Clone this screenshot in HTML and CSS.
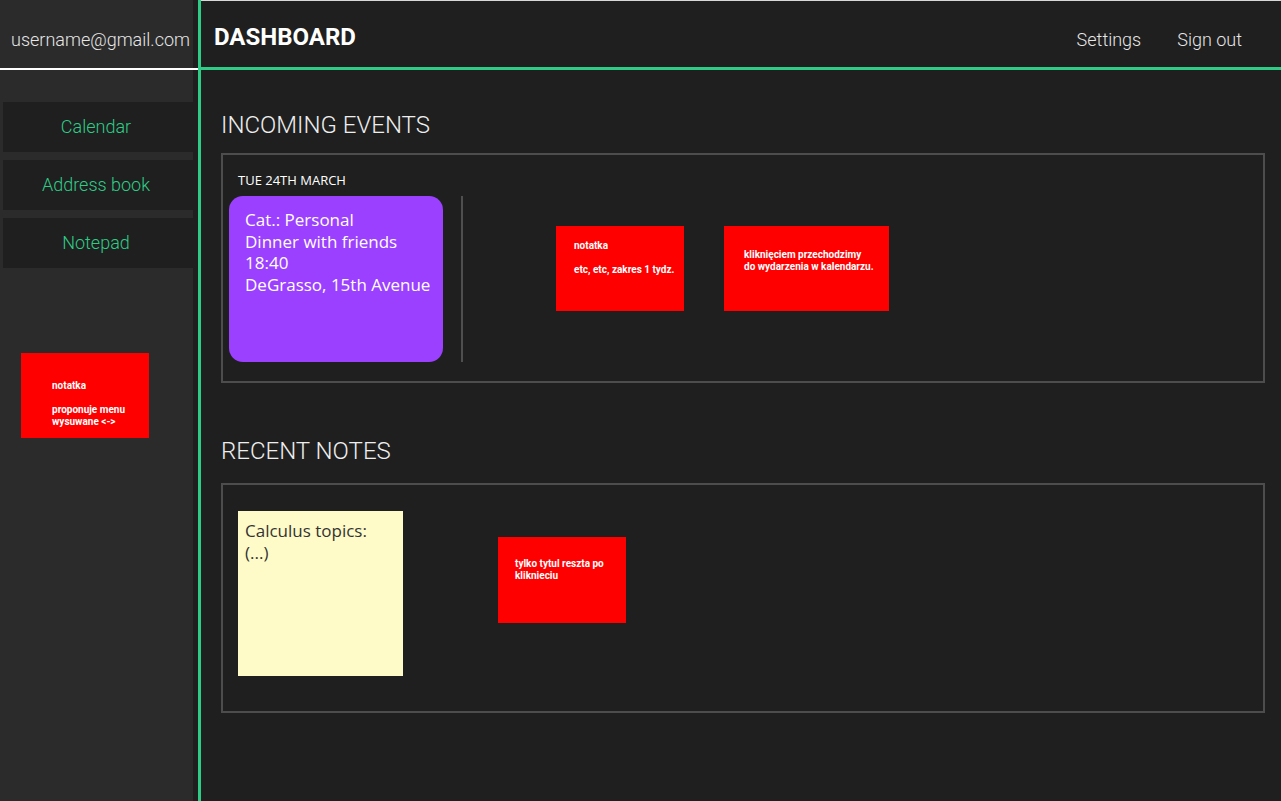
FILE: index.html
```html
<!DOCTYPE html>
<html lang="en">
<head>
    <meta charset="UTF-8">
    <meta name="viewport" content="width=device-width, initial-scale=1.0">
    <title>Dashboard</title>
<link rel="stylesheet" href="styles.css">
</head>
<body>
    <div class="side">
        <div class="user">username@gmail.com</div>
        <div class="nav">
            <div class="nav-item">Calendar</div>
            <div class="nav-item">Address book</div>
            <div class="nav-item">Notepad</div>
        </div>
        <div class="memo side-memo">
            notatka<br><br>proponuje menu<br>wysuwane &lt;-&gt;
        </div>
    </div>
    <div class="main">
        <div class="header">
            <div class="title">DASHBOARD</div>
            <div class="links">
                <div class="link">Settings</div>
                <div class="link">Sign out</div>
            </div>
        </div>
        <div class="content">
            <div class="section-title">INCOMING EVENTS</div>
            <div class="box events">
                <div class="date">TUE 24TH MARCH</div>
                <div class="row">
                    <div class="event">
                        Cat.: Personal<br>
                        Dinner with friends<br>
                        18:40<br>
                        DeGrasso, 15th Avenue
                    </div>
                    <div class="divider"></div>
                    <div class="memo ev-memo">notatka<br><br>etc, etc, zakres 1 tydz.</div>
                    <div class="memo ev-memo2">kliknięciem przechodzimy<br>do wydarzenia w kalendarzu.</div>
                </div>
            </div>
            <div class="section-title second">RECENT NOTES</div>
            <div class="box notes">
                <div class="note">Calculus topics:<br>(...)</div>
                <div class="memo note-memo">tylko tytul reszta po kliknieciu</div>
            </div>
        </div>
    </div>
</body>
</html>
```

FILE: styles.css
```css
* {
    margin: 0;
    padding: 0;
    box-sizing: border-box;
}
body {
    display: flex;
    background: #1f1f1f;
    height: 100vh;
    width: 100vw;
    overflow: hidden;
    font-family: Roboto, sans-serif;
}
.side {
    width: 198px;
    height: 100%;
    background: linear-gradient(to right, #2b2b2b 193px, #1f1f1f 193px);
    display: flex;
    flex-direction: column;
}
.user {
    height: 70px;
    border-bottom: 2px solid white;
    color: #e6e6e6;
    font-size: 18px;
    font-weight: 300;
    display: flex;
    align-items: center;
    padding-left: 11px;
    padding-top: 10px;
}
.nav {
    margin-top: 32px;
    display: flex;
    flex-direction: column;
    gap: 8px;
}
.nav-item {
    margin-left: 3px;
    width: 190px;
    height: 50px;
    background: #1f1f1f;
    color: #2ecc87;
    font-size: 18px;
    font-weight: 300;
    display: flex;
    justify-content: center;
    align-items: center;
    padding: 0 4px 2px 0;
}
.memo {
    background: red;
    color: white;
    font-family: Roboto, sans-serif;
    font-weight: bold;
    font-size: 10px;
    line-height: 12px;
    width: 128px;
    height: 85px;
    flex-shrink: 0;
}
.side-memo {
    margin: 85px 0 0 21px;
    padding: 27px 0 0 31px;
}
.main {
    flex: 1;
    height: 100%;
    border-left: 3px solid #2ecc87;
}
.header {
    height: 70px;
    border-top: 1px solid #d8d8d8;
    border-bottom: 3px solid #2ecc87;
    display: flex;
    justify-content: space-between;
    align-items: center;
    padding: 5px 0 0 13px;
}
.title {
    color: white;
    font-size: 24px;
    font-weight: bold;
    margin-top: 1px;
}
.links {
    display: flex;
    gap: 36px;
    padding-right: 39px;
    margin-top: 6px;
}
.link {
    color: #e6e6e6;
    font-size: 18px;
    font-weight: 300;
}
.content {
    padding: 41px 16px 0 20px;
}
.section-title {
    color: #eeeeee;
    font-size: 24px;
    font-weight: 300;
    height: 42px;
}
.second {
    margin-top: 54px;
    height: 46px;
}
.box {
    border: 2px solid #4d4d4d;
    height: 230px;
}
.events {
    padding: 0 6px;
}
.date {
    color: white;
    font-family: "Open Sans", sans-serif;
    font-size: 13px;
    line-height: 20px;
    margin: 15px 0 6px 9px;
}
.row {
    display: flex;
    align-items: flex-start;
}
.event {
    width: 214px;
    height: 166px;
    border-radius: 14px;
    background: #9b40ff;
    color: white;
    font-family: "Open Sans", sans-serif;
    font-size: 17px;
    line-height: 21.5px;
    padding: 13px 0 0 16px;
    flex-shrink: 0;
}
.divider {
    width: 2px;
    height: 166px;
    margin-left: 18px;
    background: #4f4f4f;
}
.ev-memo {
    margin: 30px 0 0 93px;
    padding: 14px 0 0 18px;
}
.ev-memo2 {
    width: 165px;
    margin: 30px 0 0 40px;
    padding: 23px 0 0 20px;
}
.notes {
    display: flex;
    align-items: flex-start;
}
.note {
    width: 165px;
    height: 165px;
    margin: 26px 0 0 15px;
    background: #fffbc8;
    color: #333;
    font-family: "Open Sans", sans-serif;
    font-size: 17px;
    line-height: 21.5px;
    padding: 9px 0 0 7px;
    flex-shrink: 0;
}
.note-memo {
    height: 86px;
    margin: 52px 0 0 95px;
    padding: 21px 10px 0 17px;
}
```
